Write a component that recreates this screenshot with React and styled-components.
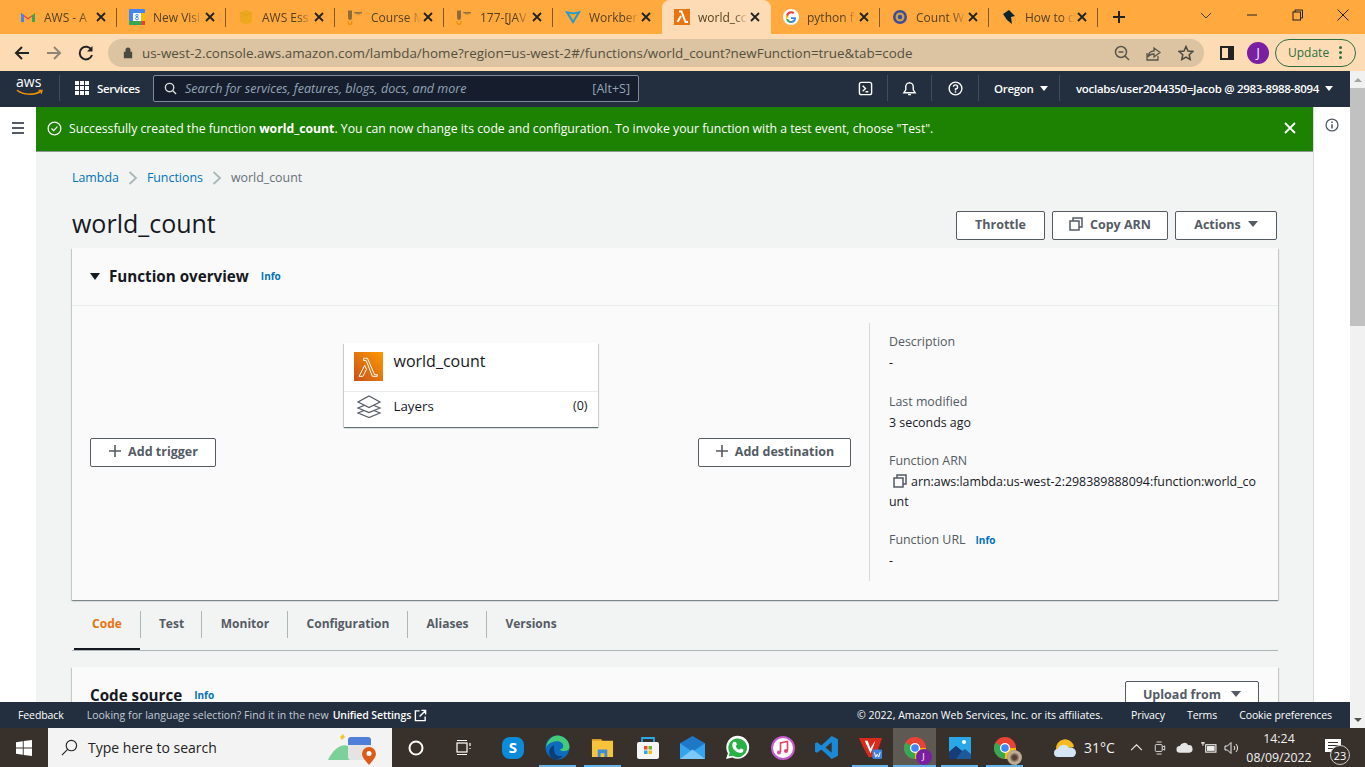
import React from 'react'
import styled, { createGlobalStyle } from 'styled-components'

const Global = createGlobalStyle`
  html, body { margin: 0; padding: 0; overflow: hidden; }
  * { box-sizing: border-box; }
  body { font-family: "Open Sans", "Liberation Sans", sans-serif; }
`

const Screen = styled.div`
  width: 1365px;
  height: 767px;
  display: flex;
  flex-direction: column;
  overflow: hidden;
  background: #fff;
`

/* browser chrome */
const TabStrip = styled.div`
  height: 34px;
  background: #ffa93f;
  display: flex;
  padding-left: 8px;
  flex: none;
`
const Tab = styled.div`
  width: 109px;
  height: 34px;
  padding-left: 12px;
  display: flex;
  align-items: center;
  position: relative;
  font-size: 12px;
  color: #54401f;
  background: ${p => (p.$active ? '#fddcb5' : 'transparent')};
  border-radius: ${p => (p.$active ? '8px 8px 0 0' : '0')};
  &::after {
    content: '';
    display: ${p => (p.$sep ? 'block' : 'none')};
    position: absolute;
    right: 0;
    top: 8px;
    height: 19px;
    width: 1px;
    background: #7a5a2a;
  }
`
const TabIcon = styled.span`
  width: 16px;
  height: 16px;
  flex: none;
  margin-right: 8px;
  display: flex;
`
const TabTitle = styled.span`
  width: 50px;
  flex: none;
  white-space: nowrap;
  -webkit-mask-image: linear-gradient(to right, #000 72%, transparent 100%);
  mask-image: linear-gradient(to right, #000 72%, transparent 100%);
`
const TabClose = styled.svg`
  width: 10px;
  height: 10px;
  margin-left: 2px;
  flex: none;
`
const NewTab = styled.svg`
  width: 14px;
  height: 14px;
  margin: 10px 0 0 14px;
`
const WindowButtons = styled.div`
  margin-left: auto;
  display: flex;
  height: 34px;
`
const WindowBtn = styled.div`
  width: ${p => p.$w || 46}px;
  height: 30px;
  display: flex;
  align-items: center;
  justify-content: center;
`
const Toolbar = styled.div`
  height: 37px;
  background: #fddcb5;
  display: flex;
  align-items: center;
  padding-left: 13px;
  flex: none;
`
const NavIcon = styled.svg`
  width: 18px;
  height: 18px;
  margin-right: 14px;
  flex: none;
`
const SidePanelIcon = styled(NavIcon)`
  margin: 0 0 0 14px;
`
const UrlPill = styled.div`
  width: 1096px;
  height: 28px;
  margin-left: -1px;
  border-radius: 14px;
  background: #dcc3a1;
  display: flex;
  align-items: center;
  padding: 0 10px 0 15px;
  font-size: 13.4px;
  color: #54503f;
`
const UrlText = styled.span`
  margin-left: 9px;
  flex: 1;
  white-space: nowrap;
`
const UrlAction = styled.svg`
  width: 16px;
  height: 16px;
  margin-left: 16px;
  flex: none;
`
const Avatar = styled.div`
  width: ${p => p.$size || 22}px;
  height: ${p => p.$size || 22}px;
  margin-left: ${p => p.$ml || 0}px;
  border-radius: 50%;
  background: #7b1fa2;
  color: #fff;
  font-size: ${p => (p.$size ? 9 : 12)}px;
  display: flex;
  align-items: center;
  justify-content: center;
  flex: none;
`
const UpdateBtn = styled.div`
  width: 81px;
  height: 28px;
  margin-left: 6px;
  border: 1px solid #2c6e3f;
  border-radius: 14px;
  background: #fddcb5;
  color: #2c6e3f;
  font-size: 12px;
  display: flex;
  align-items: center;
  padding-left: 12px;
  gap: 10px;
`
const Dots = styled.span`
  display: flex;
  flex-direction: column;
  gap: 2px;
  & > i { width: 3px; height: 3px; border-radius: 50%; background: #2c6e3f; display: block; }
`

/* page with its scrollbar */
const PageRow = styled.div`
  flex: 1;
  min-height: 0;
  display: flex;
`
const PageCol = styled.div`
  flex: 1;
  min-width: 0;
  display: flex;
  flex-direction: column;
`
const Scrollbar = styled.div`
  width: 15px;
  background: #f1f1f1;
  display: flex;
  flex-direction: column;
  align-items: center;
`
const ScrollUp = styled.div`
  height: 17px;
  width: 100%;
  display: flex;
  align-items: center;
  justify-content: center;
  &::before {
    content: '';
    border-left: 4px solid transparent;
    border-right: 4px solid transparent;
    border-bottom: 4px solid #a3a3a3;
  }
`
const ScrollThumb = styled.div`
  height: 238px;
  width: 100%;
  background: #c1c1c1;
`
const ScrollDown = styled.div`
  margin-top: auto;
  height: 17px;
  width: 100%;
  display: flex;
  align-items: center;
  justify-content: center;
  &::before {
    content: '';
    border-left: 4px solid transparent;
    border-right: 4px solid transparent;
    border-top: 4px solid #505050;
  }
`

/* aws top nav */
const AwsNav = styled.div`
  height: 36px;
  flex: none;
  background: #232f3e;
  color: #fff;
  display: flex;
  align-items: center;
  font-size: 11.5px;
  font-weight: 600;
  padding-bottom: 2px;
  letter-spacing: -0.3px;
`
const AwsLogo = styled.div`
  width: 60px;
  height: 26px;
  padding-left: 16px;
  border-right: 1px solid #414d5c;
  flex: none;
  display: flex;
  flex-direction: column;
  & > span { font-size: 14px; font-weight: 400; line-height: 14px; letter-spacing: 0; }
`
const ServicesBtn = styled.div`
  display: flex;
  align-items: center;
  gap: 8px;
  width: 93px;
  padding-left: 15px;
  flex: none;
`
const GridDots = styled.div`
  display: grid;
  grid-template-columns: repeat(3, 4px);
  grid-auto-rows: 4px;
  gap: 1px;
  & > i { background: #fff; display: block; }
`
const SearchBox = styled.div`
  width: 486px;
  height: 27px;
  background: #161e2d;
  border: 1px solid #7d8998;
  border-radius: 2px;
  display: flex;
  align-items: center;
  padding: 0 8px 0 10px;
  color: #95a5b8;
  font-weight: 400;
  font-size: 12.5px;
  letter-spacing: 0;
`
const SearchText = styled.span`
  margin-left: 8px;
  flex: 1;
  font-style: italic;
`
const NavRight = styled.div`
  margin-left: auto;
  display: flex;
  align-items: center;
  height: 100%;
`
const NavCell = styled.div`
  height: 26px;
  display: flex;
  align-items: center;
  justify-content: ${p => (p.$pad ? 'flex-start' : 'center')};
  width: ${p => p.$w}px;
  padding-left: ${p => p.$pad || 0}px;
  border-right: ${p => (p.$last ? 'none' : '1px solid #414d5c')};
  gap: 6px;
  white-space: nowrap;
`
const Caret = styled.span`
  border-left: ${p => p.$s || 4}px solid transparent;
  border-right: ${p => p.$s || 4}px solid transparent;
  border-top: ${p => (p.$s ? p.$s + 1 : 5)}px solid ${p => p.$c || '#fff'};
  display: inline-block;
  flex: none;
`

/* console body */
const Body = styled.div`
  flex: 1;
  min-height: 0;
  display: flex;
  overflow: hidden;
`
const SideRail = styled.div`
  width: 36px;
  flex: none;
  background: #fff;
  padding: 15px 0 0 12px;
  display: flex;
  flex-direction: column;
  gap: 3px;
  & > i { display: block; width: 12px; height: 2px; background: #545b64; }
`
const Main = styled.div`
  width: 1278px;
  flex: none;
  background: #f2f3f3;
  border-right: 1px solid #d5dbdb;
  overflow: hidden;
`
const InfoRail = styled.div`
  flex: 1;
  background: #fff;
  display: flex;
  justify-content: center;
  padding-top: 11px;
`
const Banner = styled.div`
  height: 45px;
  background: #1d8102;
  border-bottom: 1px solid #8f9a94;
  color: #fff;
  font-size: 12.23px;
  font-weight: 500;
  display: flex;
  align-items: center;
  padding: 0 17px 2px 11px;
  & > svg:first-child { margin-right: 7px; }
  & b { font-weight: 700; }
`
const BannerText = styled.div`
  flex: 1;
  white-space: nowrap;
`
const Content = styled.div`
  padding: 0 35px 0 36px;
`
const Crumbs = styled.div`
  display: flex;
  align-items: center;
  height: 50px;
  padding-top: 1px;
  font-size: 12.4px;
  color: #687078;
  gap: 9px;
`
const CrumbLink = styled.span`
  color: #0073bb;
`
const TitleRow = styled.div`
  display: flex;
  align-items: center;
  height: 42px;
  gap: 7px;
  padding-right: 1px;
`
const Title = styled.h1`
  margin: 0 auto 0 0;
  font-size: 25px;
  font-weight: 400;
  color: #16191f;
`
const Btn = styled.div`
  width: ${p => p.$w}px;
  height: 29px;
  border: 1px solid #545b64;
  border-radius: 2px;
  background: #fff;
  color: #545b64;
  font-size: 12.5px;
  font-weight: 700;
  display: flex;
  align-items: center;
  justify-content: center;
  gap: 7px;
  flex: none;
  padding-bottom: 3px;
`
const ActionBtn = styled(Btn)`
  margin-top: 5px;
`
const Panel = styled.section`
  background: #fafafa;
  box-shadow: 0 1px 1px 0 rgba(0, 28, 36, 0.3), 1px 1px 1px 0 rgba(0, 28, 36, 0.15), -1px 1px 1px 0 rgba(0, 28, 36, 0.15);
  margin-top: 4px;
`
const PanelHeader = styled.div`
  height: 58px;
  border-bottom: 1px solid #eaeded;
  display: flex;
  align-items: center;
  padding: 0 0 2px 18px;
`
const DiscloseCaret = styled.span`
  border-left: 5.5px solid transparent;
  border-right: 5.5px solid transparent;
  border-top: 7px solid #16191f;
  margin-right: 9px;
  margin-top: 1px;
`
const PanelTitle = styled.h2`
  margin: 0;
  font-size: 15.2px;
  font-weight: 700;
  color: #16191f;
`
const InfoLink = styled.span`
  color: #0073bb;
  font-size: 10px;
  font-weight: 700;
  margin-left: ${p => p.$ml || 12}px;
`
const Overview = styled.div`
  height: 294px;
  display: flex;
`
const Diagram = styled.div`
  width: 797px;
  flex: none;
  padding: 37px 18px 0;
  display: grid;
  grid-template-columns: 1fr auto 1fr;
  align-items: start;
`
const OutlineBtn = styled(Btn)`
  margin-top: 95px;
  justify-self: ${p => (p.$end ? 'end' : 'start')};
  gap: 6px;
`
const FnCard = styled.div`
  width: 254px;
  height: 84px;
  background: #fff;
  box-shadow: 0 1px 1px 0 rgba(0, 28, 36, 0.5), 1px 1px 1px 0 rgba(0, 28, 36, 0.12), -1px 1px 1px 0 rgba(0, 28, 36, 0.12);
`
const FnTop = styled.div`
  height: 49px;
  border-bottom: 1px solid #eaeded;
  padding: 9px 0 0 10px;
  display: flex;
  gap: 11px;
  font-size: 16px;
  color: #16191f;
`
const LambdaBox = styled.div`
  width: 29px;
  height: 29px;
  background: linear-gradient(to top right, #c8511b, #ff9900);
  display: flex;
  align-items: center;
  justify-content: center;
  flex: none;
`
const FnName = styled.span`
  line-height: 19px;
`
const FnBottom = styled.div`
  height: 35px;
  display: flex;
  align-items: center;
  padding: 0 10px 8px 12px;
  font-size: 13.3px;
  color: #16191f;
  gap: 12px;
  & > span:last-child { margin-left: auto; font-size: 12.5px; }
`
const Details = styled.div`
  margin-top: 17px;
  height: 258px;
  border-left: 1px solid #d5dbdb;
  padding-left: 19px;
  flex: 1;
  font-size: 12.4px;
  line-height: 20px;
  color: #16191f;
`
const DetailLabel = styled.div`
  color: #545b64;
  margin-top: ${p => p.$mt || 0}px;
`
const DetailValue = styled.div`
  margin-top: 1px;
  word-break: break-all;
  width: 372px;
  & > svg { margin: 0 4px -2px 4px; }
`
const TabsBar = styled.div`
  margin-top: 11px;
  height: 40px;
  border-bottom: 1px solid #aab7b8;
  display: flex;
  padding-left: 2px;
`
const PageTab = styled.div`
  height: 39px;
  position: relative;
  display: flex;
  align-items: center;
  justify-content: center;
  width: ${p => p.$w}px;
  font-size: 12px;
  font-weight: 700;
  color: ${p => (p.$active ? '#ec7211' : '#545b64')};
  padding-bottom: ${p => (p.$active ? 12 : 14)}px;
  padding-left: ${p => (p.$active ? 0 : 2)}px;
  border-bottom: ${p => (p.$active ? '2px solid #16191f' : 'none')};
  &::after {
    content: '';
    display: ${p => (p.$last ? 'none' : 'block')};
    position: absolute;
    right: -1px;
    top: 0;
    height: 27px;
    width: 1px;
    background: #aab7b8;
  }
`
const CodePanel = styled(Panel)`
  margin-top: 16px;
  height: 60px;
  display: flex;
  padding: 14px 19px 0 18px;
  justify-content: space-between;
`
const CodeTitle = styled.div`
  display: flex;
  align-items: center;
  height: 26px;
  margin-top: 1px;
`
const UploadBtn = styled(Btn)`
  gap: 10px;
`

/* footer */
const Footer = styled.div`
  height: 26px;
  flex: none;
  background: #232f3e;
  color: #fff;
  font-size: 10.5px;
  font-weight: 500;
  display: flex;
  align-items: center;
  padding-left: 18px;
  letter-spacing: -0.1px;
`
const FooterMuted = styled.span`
  color: #c4ccd6;
  margin-left: 23px;
  letter-spacing: 0.04px;
`
const FooterStrong = styled.span`
  font-weight: 600;
  margin-left: 4px;
`
const FooterIcon = styled.svg`
  margin-left: 3px;
`
const FooterRight = styled.div`
  margin-left: auto;
  display: flex;
  gap: 22px;
  padding-right: 18px;
`
const Copyright = styled.span`
  letter-spacing: 0.02px;
  margin-right: 6px;
`

/* windows taskbar */
const Taskbar = styled.div`
  height: 39px;
  flex: none;
  background: #38312b;
  display: flex;
  align-items: center;
  color: #fff;
`
const StartBtn = styled.div`
  width: 48px;
  display: flex;
  justify-content: center;
`
const WinSearch = styled.div`
  width: 344px;
  height: 39px;
  background: #f3f3f3;
  color: #222;
  display: flex;
  align-items: center;
  padding: 0 16px 0 13px;
  font-size: 14px;
  gap: 10px;
  flex: none;
`
const WinSearchText = styled.span`
  flex: 1;
`
const TaskIcon = styled.div`
  width: ${p => p.$w || 45}px;
  height: 39px;
  display: flex;
  align-items: center;
  justify-content: center;
  position: relative;
  flex: none;
  background: ${p => (p.$active ? '#5e5952' : 'transparent')};
  background-clip: content-box;
  padding: ${p => (p.$active ? '0 1px' : '0')};
  &::after {
    content: '';
    display: ${p => (p.$open ? 'block' : 'none')};
    position: absolute;
    left: ${p => (p.$active ? 1 : 4)}px;
    right: ${p => (p.$active ? 1 : 4)}px;
    bottom: 0;
    height: 2px;
    background: #63b5ee;
  }
`
const AppIcons = styled.div`
  display: flex;
  margin-left: 3px;
`
const Tray = styled.div`
  margin-left: auto;
  display: flex;
  align-items: center;
  height: 100%;
`
const Weather = styled.div`
  display: flex;
  align-items: center;
  font-size: 14px;
  gap: 7px;
  width: 71px;
  color: #f0f0f0;
`
const TrayIcon = styled.div`
  width: 24px;
  display: flex;
  justify-content: center;
  align-items: center;
`
const Clock = styled.div`
  width: 70px;
  text-align: center;
  font-size: 12.3px;
  line-height: 19px;
  color: #f0f0f0;
`
const Notify = styled.div`
  width: 51px;
  height: 39px;
  position: relative;
  padding: 10px 0 0 11px;
`
const NotifyBadge = styled.div`
  position: absolute;
  left: 16px;
  top: 17px;
  width: 20px;
  height: 20px;
  border-radius: 50%;
  border: 1px solid #ccc;
  background: #38312b;
  font-size: 11px;
  display: flex;
  align-items: center;
  justify-content: center;
`

const X = ({ c = '#222', w = 1.8 }) => (
  <TabClose viewBox="0 0 10 10"><path d="M1 1l8 8M9 1l-8 8" stroke={c} strokeWidth={w} /></TabClose>
)
const Gmail = () => (
  <svg viewBox="0 0 16 16" width="16" height="16">
    <path d="M1 13V4l7 5 7-5v9h-3V7.500L8 10.500 4 7.500V13z" fill="#ea4335" />
    <path d="M1 4v9h3V6z" fill="#4285f4" /><path d="M15 4v9h-3V6z" fill="#34a853" />
    <path d="M12 6l3-2v0l-1-1-2 1.500z" fill="#fbbc04" />
  </svg>
)
const Calendar = () => (
  <svg viewBox="0 0 16 16" width="16" height="16">
    <rect x="0" y="0" width="16" height="16" rx="1" fill="#4285f4" />
    <rect x="12" y="4" width="4" height="8" fill="#fbbc04" /><rect x="0" y="12" width="12" height="4" fill="#34a853" />
    <rect x="12" y="12" width="4" height="4" fill="#ea4335" /><rect x="4" y="4" width="8" height="8" fill="#fff" />
    <circle cx="8" cy="6.500" r="1.200" fill="none" stroke="#4285f4" /><circle cx="8" cy="9.500" r="1.400" fill="none" stroke="#4285f4" />
  </svg>
)
const Cube = () => (
  <svg viewBox="0 0 16 16" width="16" height="16">
    <path d="M8 1l6 2.500V13l-6 2.500L2 13V3.500z" fill="#eda81f" /><path d="M2 3.500L8 6l6-2.500" fill="none" stroke="#e2a01d" />
  </svg>
)
const Owl = () => (
  <svg viewBox="0 0 16 16" width="16" height="16">
    <path d="M1 1l1 1 1-1 1 1 1-1v7a2 3 0 0 1-4 0z" fill="#8b6b3a" />
    <path d="M7 3h8v1l-1 1-1-1-1 2-1-2-1 2-1-2-1 1z" fill="#8f7140" />
    <path d="M1 12a2 3.500 0 0 0 4 0" fill="none" stroke="#f29111" strokeWidth="1.400" />
  </svg>
)
const Vite = () => (
  <svg viewBox="0 0 16 16" width="16" height="16">
    <path d="M0 2l8 1.500L16 2 8 15z" fill="#1f9cd8" /><path d="M4 4.500l4 .8 4-.8-4 7z" fill="#f7a21b" />
    <path d="M6 6l2 .3 2-.3-2 3.600z" fill="#ffa93f" />
  </svg>
)
const LambdaGlyph = ({ s = 24, sw = 0.9 }) => (
  <svg viewBox="0 0 22 22" width={s} height={s}>
    <path d="M7 3h3.500l6.500 15h2.500v1.500h-4.500L9.300 5H7zM8 9.500l1.600 3.600-3.200 6.400H2.800z" fill="none" stroke="#fff" strokeWidth={sw} />
  </svg>
)
const Google = () => (
  <svg viewBox="0 0 16 16" width="16" height="16">
    <circle cx="8" cy="8" r="8" fill="#fff" />
    <path d="M13 8.200H8v1.700h3c-.4 1.300-1.500 2-3 2V14c2.800 0 5-2 5-5z" fill="#4285f4" />
    <path d="M3.200 10a5.200 5.200 0 0 0 4.800 4v-2c-1.200 0-2.300-.8-2.800-2z" fill="#34a853" />
    <path d="M3.200 6a5.300 5.300 0 0 0 0 4l2-1.200a3 3 0 0 1 0-1.600z" fill="#fbbc04" />
    <path d="M3.200 6l2 1.200C5.700 5 6.800 4.300 8 4.300c.8 0 1.500.3 2 .8l1.500-1.500A5 5 0 0 0 8 2.200 5.200 5.200 0 0 0 3.200 6z" fill="#ea4335" />
  </svg>
)
const Seal = () => (
  <svg viewBox="0 0 16 16" width="16" height="16">
    <circle cx="8" cy="8" r="7" fill="#3f4a9b" /><circle cx="8" cy="8" r="4.500" fill="#c9a24a" /><circle cx="8" cy="8" r="2.200" fill="#3f4a9b" />
  </svg>
)
const Quill = () => (
  <svg viewBox="0 0 16 16" width="16" height="16">
    <path d="M2 5l6-4 6 6-4 1 1 7-5-4z" fill="#10222e" />
  </svg>
)
const TabLambda = () => (
  <svg viewBox="0 0 16 16" width="16" height="16">
    <rect width="16" height="16" fill="#e8730f" />
    <path d="M5 2.500h2.500l4 10.500H14M7 7l-3.500 6" fill="none" stroke="#fff" strokeWidth="2" />
  </svg>
)

// only the part of each title that shows before chrome fades it out
const tabs = [
  { title: 'AWS - A', Icon: Gmail, sep: true },
  { title: 'New Visi', Icon: Calendar, sep: true },
  { title: 'AWS Ess', Icon: Cube, sep: true },
  { title: 'Course M', Icon: Owl, sep: true },
  { title: '177-[JAV', Icon: Owl, sep: true },
  { title: 'Workber', Icon: Vite, sep: false },
  { title: 'world_cc', Icon: TabLambda, active: true, sep: false },
  { title: 'python f', Icon: Google, sep: true },
  { title: 'Count W', Icon: Seal, sep: true },
  { title: 'How to c', Icon: Quill, sep: true },
]

const pageTabs = [
  { label: 'Code', w: 66, active: true },
  { label: 'Test', w: 61 },
  { label: 'Monitor', w: 86 },
  { label: 'Configuration', w: 120 },
  { label: 'Aliases', w: 79 },
  { label: 'Versions', w: 88, last: true },
]

const CopyIcon = ({ c = '#545b64' }) => (
  <svg viewBox="0 0 14 14" width="14" height="14" fill="none" stroke={c} strokeWidth="1.500">
    <rect x="1" y="4" width="9" height="9" /><path d="M4 4V1h9v9h-3" />
  </svg>
)
const Plus = () => (
  <svg viewBox="0 0 14 14" width="14" height="14"><path d="M7 1v12M1 7h12" stroke="#545b64" strokeWidth="1.600" /></svg>
)
const CrumbChevron = () => (
  <svg viewBox="0 0 10 14" width="10" height="14"><path d="M1.500 1l6.500 6-6.500 6" fill="none" stroke="#aab7b8" strokeWidth="1.800" /></svg>
)
const Windows = () => (
  <svg viewBox="0 0 16 16" width="16" height="16">
    <path d="M0 2.200l6.800-1v6.300H0zM7.700 1l8.300-1v7.500H7.700zM0 8.500h6.800v6.300l-6.800-1zM7.700 8.500H16V16l-8.300-1.100z" fill="#fff" />
  </svg>
)
const Chrome = () => (
  <svg viewBox="0 0 24 24" width="24" height="24">
    <circle cx="12" cy="12" r="11" fill="#ea4335" />
    <path d="M12 12L2.500 6.500A11 11 0 0 0 12 23z" fill="#34a853" />
    <path d="M12 12h11a11 11 0 0 1-11 11z" fill="#fbbc04" />
    <circle cx="12" cy="12" r="5" fill="#fff" /><circle cx="12" cy="12" r="3.800" fill="#4285f4" />
  </svg>
)
const ChromeWrap = styled.div`
  position: relative;
  width: 24px;
  height: 24px;
`
const ChromeBadge = styled.div`
  position: absolute;
  right: -5px;
  bottom: -5px;
`
const Thumb = styled.div`
  width: 15px;
  height: 15px;
  border-radius: 50%;
  background: radial-gradient(circle, #574236 20%, #c4b49d 50%, #8b7a66 100%);
`

export default function App() {
  return (
    <Screen>
      <Global />
      <TabStrip>
        {tabs.map(t => (
          <Tab key={t.title} $active={t.active} $sep={t.sep}>
            <TabIcon><t.Icon /></TabIcon>
            <TabTitle>{t.title}</TabTitle>
            <X />
          </Tab>
        ))}
        <NewTab viewBox="0 0 14 14"><path d="M7 1v12M1 7h12" stroke="#222" strokeWidth="2" /></NewTab>
        <WindowButtons>
          <WindowBtn>
            <svg viewBox="0 0 12 12" width="12" height="12"><path d="M1 4l5 5 5-5" fill="none" stroke="#3a3a3a" /></svg>
          </WindowBtn>
          <WindowBtn>
            <svg viewBox="0 0 12 12" width="12" height="12"><path d="M1 6h10" stroke="#222" /></svg>
          </WindowBtn>
          <WindowBtn>
            <svg viewBox="0 0 12 12" width="12" height="12" fill="none" stroke="#222"><rect x="1" y="3" width="7.500" height="8" /><path d="M3 3V1h7.500v8H8.500" /></svg>
          </WindowBtn>
          <WindowBtn $w={44}>
            <svg viewBox="0 0 12 12" width="12" height="12"><path d="M.5.5l11 11M11.500.5l-11 11" stroke="#222" /></svg>
          </WindowBtn>
        </WindowButtons>
      </TabStrip>

      <Toolbar>
        <NavIcon viewBox="0 0 18 18"><path d="M16 9H3M9 3L3 9l6 6" fill="none" stroke="#222" strokeWidth="2" /></NavIcon>
        <NavIcon viewBox="0 0 18 18"><path d="M2 9h13M9 3l6 6-6 6" fill="none" stroke="#8f8576" strokeWidth="2" /></NavIcon>
        <NavIcon viewBox="0 0 18 18"><path d="M14.500 6A6.300 6.300 0 1 0 15 11" fill="none" stroke="#222" strokeWidth="2" /><path d="M15.500 2v5.500H10z" fill="#222" /></NavIcon>
        <UrlPill>
          <svg viewBox="0 0 12 14" width="10" height="13"><path d="M3 6V4a3 3 0 0 1 6 0v2h2v8H1V6z" fill="#4d4a40" /></svg>
          <UrlText>us-west-2.console.aws.amazon.com/lambda/home?region=us-west-2#/functions/world_count?newFunction=true&amp;tab=code</UrlText>
          <UrlAction viewBox="0 0 16 16" fill="none" stroke="#5a564a" strokeWidth="1.500"><circle cx="7" cy="7" r="5.500" /><path d="M11 11l4 4M4.500 7h5" /></UrlAction>
          <UrlAction viewBox="0 0 16 16" fill="none" stroke="#5a564a" strokeWidth="1.300"><path d="M1 8v7h11v-4M8 3v3C4 6 2.500 8.500 2 12c1.500-2.500 3-3 6-3v3l6-4.500z" /></UrlAction>
          <UrlAction viewBox="0 0 16 16" fill="none" stroke="#4d4a40" strokeWidth="1.500"><path d="M8 1.500l2 4.500 4.800.5-3.600 3.200 1 4.800L8 12l-4.200 2.500 1-4.800L1.200 6.500 6 6z" /></UrlAction>
        </UrlPill>
        <SidePanelIcon viewBox="0 0 18 18"><rect x="2" y="2" width="14" height="14" fill="#222" /><rect x="4" y="4" width="6" height="10" fill="#fddcb5" /></SidePanelIcon>
        <Avatar $ml={11}>J</Avatar>
        <UpdateBtn>
          Update
          <Dots><i /><i /><i /></Dots>
        </UpdateBtn>
      </Toolbar>

      <PageRow>
        <PageCol>
          <AwsNav>
            <AwsLogo>
              <span>aws</span>
              <svg viewBox="0 0 30 8" width="28" height="8"><path d="M1 1c7 5 18 6 26 1" fill="none" stroke="#ff9900" strokeWidth="1.500" /><path d="M24 1l4 0-1 4" fill="none" stroke="#ff9900" strokeWidth="1.200" /></svg>
            </AwsLogo>
            <ServicesBtn>
              <GridDots>{Array.from({ length: 9 }, (_, i) => <i key={i} />)}</GridDots>
              Services
            </ServicesBtn>
            <SearchBox>
              <svg viewBox="0 0 14 14" width="13" height="13" fill="none" stroke="#d5dbdb" strokeWidth="1.500"><circle cx="6" cy="6" r="4.500" /><path d="M9.500 9.500L13 13" /></svg>
              <SearchText>Search for services, features, blogs, docs, and more</SearchText>
              <span>[Alt+S]</span>
            </SearchBox>
            <NavRight>
              <NavCell $w={44}>
                <svg viewBox="0 0 16 16" width="15" height="15" fill="none" stroke="#fff" strokeWidth="1.500"><rect x="1.500" y="1.500" width="13" height="13" rx="2" /><path d="M5 5l3 3-3 3M8 11.500h3" /></svg>
              </NavCell>
              <NavCell $w={44}>
                <svg viewBox="0 0 16 16" width="15" height="15" fill="none" stroke="#fff" strokeWidth="1.500"><path d="M2 12.500h12l-2-3V6a4 4 0 0 0-8 0v3.500zM8 1v1M6.500 14.500h3" /></svg>
              </NavCell>
              <NavCell $w={47}>
                <svg viewBox="0 0 16 16" width="15" height="15" fill="none" stroke="#fff" strokeWidth="1.500"><circle cx="8" cy="8" r="6.800" /><path d="M5.800 6.200A2.200 2.200 0 1 1 8 8.500V10M8 11v1.500" /></svg>
              </NavCell>
              <NavCell $w={81} $pad={15}>Oregon <Caret /></NavCell>
              <NavCell $last $w={290} $pad={16}>voclabs/user2044350=Jacob @ 2983-8988-8094 <Caret /></NavCell>
            </NavRight>
          </AwsNav>

          <Body>
            <SideRail><i /><i /><i /></SideRail>
            <Main>
              <Banner>
                <svg viewBox="0 0 16 16" width="15" height="15" fill="none" stroke="#fff" strokeWidth="1.300"><circle cx="8" cy="8" r="6.800" /><path d="M4.800 8l2.300 2.300 4-4.300" /></svg>
                <BannerText>Successfully created the function <b>world_count</b>. You can now change its code and configuration. To invoke your function with a test event, choose "Test".</BannerText>
                <svg viewBox="0 0 12 12" width="12" height="12"><path d="M1 1l10 10M11 1L1 11" stroke="#fff" strokeWidth="1.800" /></svg>
              </Banner>
              <Content>
                <Crumbs>
                  <CrumbLink>Lambda</CrumbLink>
                  <CrumbChevron />
                  <CrumbLink>Functions</CrumbLink>
                  <CrumbChevron />
                  <span>world_count</span>
                </Crumbs>
                <TitleRow>
                  <Title>world_count</Title>
                  <ActionBtn $w={89}>Throttle</ActionBtn>
                  <ActionBtn $w={116}><CopyIcon /> Copy ARN</ActionBtn>
                  <ActionBtn $w={102}>Actions <Caret $s={5} $c="#545b64" /></ActionBtn>
                </TitleRow>
                <Panel>
                  <PanelHeader>
                    <DiscloseCaret />
                    <PanelTitle>Function overview</PanelTitle>
                    <InfoLink>Info</InfoLink>
                  </PanelHeader>
                  <Overview>
                    <Diagram>
                      <OutlineBtn $w={126}><Plus /> Add trigger</OutlineBtn>
                      <FnCard>
                        <FnTop>
                          <LambdaBox><LambdaGlyph /></LambdaBox>
                          <FnName>world_count</FnName>
                        </FnTop>
                        <FnBottom>
                          <svg viewBox="0 0 26 24" width="26" height="24" fill="#fff" stroke="#545b64" strokeWidth="1.200">
                            <path d="M13 14.500l11 4.500-11 4.500L2 19z" /><path d="M13 9.500L24 14l-11 4.500L2 14z" /><path d="M13 2L24 8l-11 5.500L2 8z" />
                          </svg>
                          <span>Layers</span>
                          <span>(0)</span>
                        </FnBottom>
                      </FnCard>
                      <OutlineBtn $end $w={153}><Plus /> Add destination</OutlineBtn>
                    </Diagram>
                    <Details>
                      <DetailLabel $mt={9}>Description</DetailLabel>
                      <DetailValue>-</DetailValue>
                      <DetailLabel $mt={19}>Last modified</DetailLabel>
                      <DetailValue>3 seconds ago</DetailValue>
                      <DetailLabel $mt={18}>Function ARN</DetailLabel>
                      <DetailValue><CopyIcon />arn:aws:lambda:us-west-2:298389888094:function:world_count</DetailValue>
                      <DetailLabel $mt={18}>Function URL<InfoLink $ml={10}>Info</InfoLink></DetailLabel>
                      <DetailValue>-</DetailValue>
                    </Details>
                  </Overview>
                </Panel>
                <TabsBar>
                  {pageTabs.map(t => (
                    <PageTab key={t.label} $w={t.w} $active={t.active} $last={t.last}>{t.label}</PageTab>
                  ))}
                </TabsBar>
                <CodePanel>
                  <CodeTitle>
                    <PanelTitle>Code source</PanelTitle>
                    <InfoLink>Info</InfoLink>
                  </CodeTitle>
                  <UploadBtn $w={134}>Upload from <Caret $s={5} $c="#545b64" /></UploadBtn>
                </CodePanel>
              </Content>
            </Main>
            <InfoRail>
              <svg viewBox="0 0 16 16" width="14" height="14" fill="none" stroke="#545b64" strokeWidth="1.500"><circle cx="8" cy="8" r="6.800" /><path d="M8 7v5M8 4v1.800" strokeWidth="1.800" /></svg>
            </InfoRail>
          </Body>

          <Footer>
            <span>Feedback</span>
            <FooterMuted>Looking for language selection? Find it in the new</FooterMuted>
            <FooterStrong>Unified Settings</FooterStrong>
            <FooterIcon viewBox="0 0 14 14" width="13" height="13" fill="none" stroke="#fff" strokeWidth="1.500"><path d="M6 2H1.500v10.500H12V8M8 1.500h4.500V6M12.500 1.500L6 8" /></FooterIcon>
            <FooterRight>
              <Copyright>© 2022, Amazon Web Services, Inc. or its affiliates.</Copyright>
              <span>Privacy</span>
              <span>Terms</span>
              <span>Cookie preferences</span>
            </FooterRight>
          </Footer>
        </PageCol>
        <Scrollbar>
          <ScrollUp />
          <ScrollThumb />
          <ScrollDown />
        </Scrollbar>
      </PageRow>

      <Taskbar>
        <StartBtn><Windows /></StartBtn>
        <WinSearch>
          <svg viewBox="0 0 18 18" width="17" height="17" fill="none" stroke="#222" strokeWidth="1.200"><circle cx="11" cy="7" r="5.500" /><path d="M7 11l-6 6" /></svg>
          <WinSearchText>Type here to search</WinSearchText>
          <svg viewBox="0 0 48 34" width="48" height="34">
            <path d="M12 6l3-3 2 3-3 3z" fill="#f8c52c" />
            <path d="M0 29c5-11 14-17 20-14 4 2 4 8 5 14z" fill="#7ed09a" />
            <rect x="20" y="6" width="23" height="23" rx="3" fill="#e4e4e4" /><path d="M20 14V9a3 3 0 0 1 3-3h17a3 3 0 0 1 3 3v5z" fill="#4f7fd8" />
            <path d="M41 34c-4-5-7-8-7-11a7 7 0 0 1 14 0c0 3-3 6-7 11z" fill="#dd5b18" /><circle cx="41" cy="22.500" r="2.500" fill="#fff" />
          </svg>
        </WinSearch>
        <TaskIcon $w={48}>
          <svg viewBox="0 0 16 16" width="16" height="16" fill="none" stroke="#fff" strokeWidth="2"><circle cx="8" cy="8" r="6.500" /></svg>
        </TaskIcon>
        <TaskIcon $w={47}>
          <svg viewBox="0 0 18 18" width="18" height="18" fill="none" stroke="#fff" strokeWidth="1.200"><rect x="2" y="4" width="10" height="9" /><path d="M2 1.500h10M2 15.500h10M15 4v3M15 9v1" /></svg>
        </TaskIcon>
        <AppIcons>
          <TaskIcon>
            <svg viewBox="0 0 24 24" width="24" height="24"><rect x="1" y="1" width="22" height="22" rx="8" fill="#0c8cd8" /><text x="12" y="17" textAnchor="middle" fontSize="15" fontWeight="700" fill="#fff" fontFamily="Open Sans">S</text></svg>
          </TaskIcon>
          <TaskIcon $open>
            <svg viewBox="0 0 24 24" width="25" height="25"><circle cx="12" cy="12" r="11.500" fill="#0f6cbd" /><path d="M1 12C2 5 7 .5 12 .5c6 0 11.500 5 11.500 11 0 3-3 4-6 4-2 0-3-1-3-2 2 0 3-1 3-3 0-3-3-4.500-6-4.500C7 6 3 8 1 12z" fill="#45c97a" /><path d="M9 15c0 4 4 6 8 5-1 2-4 3.500-6 3.500-5 0-7-4-7-7s2-6 5-7c-1 1.500 0 5.500 0 5.500z" fill="#0a3f7a" /></svg>
          </TaskIcon>
          <TaskIcon $open>
            <svg viewBox="0 0 24 24" width="23" height="23"><path d="M1 3h9l2 2h11v17H1z" fill="#f8c23d" /><path d="M1 3h9l2 2H1z" fill="#d99a20" /><path d="M7 22v-8h10v8h-3v-4h-4v4z" fill="#3b8ed8" /></svg>
          </TaskIcon>
          <TaskIcon>
            <svg viewBox="0 0 24 24" width="24" height="24"><rect x="1" y="6" width="22" height="17" rx="2" fill="#f5f5f5" /><path d="M6 6V2h12v4" fill="none" stroke="#2aa8e8" strokeWidth="1.800" /><rect x="8" y="10" width="3.500" height="3.500" fill="#e74c2c" /><rect x="12.500" y="10" width="3.500" height="3.500" fill="#6fb52c" /><rect x="8" y="14.500" width="3.500" height="3.500" fill="#2aa8e8" /><rect x="12.500" y="14.500" width="3.500" height="3.500" fill="#f8b91c" /></svg>
          </TaskIcon>
          <TaskIcon>
            <svg viewBox="0 0 24 22" width="25" height="23"><path d="M0 7l12-7 12 7v15H0z" fill="#1e78c8" /><path d="M0 7l12 8 12-8v15H0z" fill="#35a4ee" /><path d="M0 22l12-9 12 9z" fill="#7cc8f8" /></svg>
          </TaskIcon>
          <TaskIcon>
            <svg viewBox="0 0 24 24" width="25" height="25"><path d="M1 23l1.800-5.500A11 11 0 1 1 7 21.500z" fill="#fff" /><path d="M3.500 20.500l1-3.500A9 9 0 1 1 7.500 20z" fill="#29b048" /><path d="M8.500 6.500l2 .2 1 2.500-1.300 1.500c.7 1.500 2 2.800 3.500 3.500l1.500-1.300 2.500 1-.2 2c-.5 1-2 1.500-3 1.300C10 16.500 7 13 7 9.500c0-1 .7-2.500 1.500-3z" fill="#fff" /></svg>
          </TaskIcon>
          <TaskIcon>
            <svg viewBox="0 0 24 24" width="24" height="24"><circle cx="12" cy="12" r="11" fill="#fff" stroke="#c65bd1" strokeWidth="2" /><path d="M9.500 16V7l7-1.500v9" fill="none" stroke="#e0436b" strokeWidth="1.600" /><circle cx="8" cy="16.500" r="2" fill="#d84ba0" /><circle cx="15" cy="15" r="2" fill="#e0436b" /></svg>
          </TaskIcon>
          <TaskIcon $w={43}>
            <svg viewBox="0 0 24 24" width="25" height="25"><path d="M17 1l6 3v16l-6 3L7 14l-4 3-2-1V8l2-1 4 3zM17 7l-6 5 6 5z" fill="#1a8ad8" fillRule="evenodd" /></svg>
          </TaskIcon>
          <TaskIcon $w={44} $open>
            <svg viewBox="0 0 26 26" width="25" height="25"><path d="M1 3h24l-3 9-5 11h-6L5 12z" fill="#d92a1c" /><path d="M7 6l6 13 3-7 2-6-4 6-1 2-3-8z" fill="#fff" /><rect x="15" y="15" width="10" height="10" rx="1.500" fill="#3f82e0" /><path d="M17 18l1.500 5 1.500-3 1.500 3 1.500-5" fill="none" stroke="#fff" /></svg>
          </TaskIcon>
          <TaskIcon $active $open>
            <ChromeWrap><Chrome /><ChromeBadge><Avatar $size={16}>J</Avatar></ChromeBadge></ChromeWrap>
          </TaskIcon>
          <TaskIcon $open>
            <svg viewBox="0 0 22 22" width="22" height="22"><rect width="22" height="22" fill="#2aa7e8" /><path d="M0 22v-7l7-6 6 5 3-2 6 5v5z" fill="#1d5a9c" /><path d="M7 9l6 5-6 8H0v-7z" fill="#163d78" /><circle cx="15" cy="5" r="2" fill="#fff" /></svg>
          </TaskIcon>
          <TaskIcon $open>
            <ChromeWrap><Chrome /><ChromeBadge><Thumb /></ChromeBadge></ChromeWrap>
          </TaskIcon>
        </AppIcons>
        <Tray>
          <Weather>
            <svg viewBox="0 0 24 20" width="24" height="22"><path d="M3 12a9 9 0 0 1 18-3z" fill="#f8b91c" /><path d="M5 19a4 4 0 0 1 0-8 6 6 0 0 1 11-1 4.500 4.500 0 0 1 4 9z" fill="#d4e6f5" /></svg>
            31°C
          </Weather>
          <TrayIcon><svg viewBox="0 0 14 10" width="13" height="9"><path d="M1 8l6-6 6 6" fill="none" stroke="#eee" strokeWidth="1.200" /></svg></TrayIcon>
          <TrayIcon><svg viewBox="0 0 14 18" width="12" height="16" fill="none" stroke="#eee"><rect x="1.500" y="5" width="8" height="8" rx="1" /><path d="M9.500 8l3-1.500v5l-3-1.500M3 2h6M3 16h6" /></svg></TrayIcon>
          <TrayIcon><svg viewBox="0 0 18 11" width="17" height="11"><path d="M4 11a3.500 3.500 0 0 1 0-7 5 5 0 0 1 9-1 4 4 0 0 1 1 8z" fill="#e5e5e5" /></svg></TrayIcon>
          <TrayIcon><svg viewBox="0 0 18 14" width="17" height="13" fill="none" stroke="#eee" strokeWidth="1.200"><rect x="6" y="4" width="11" height="8" /><rect x="8" y="6" width="7" height="4" fill="#eee" /><path d="M1 2h4M3 1v4" /></svg></TrayIcon>
          <TrayIcon><svg viewBox="0 0 16 14" width="16" height="14" fill="none" stroke="#eee"><path d="M1 5h2.500L7 1.500v11L3.500 9H1zM10 5a3 3 0 0 1 0 4M12 3a6 6 0 0 1 0 8" /></svg></TrayIcon>
          <Clock>14:24<br />08/09/2022</Clock>
          <Notify>
            <svg viewBox="0 0 16 16" width="16" height="16"><rect width="16" height="13" fill="#fff" /><path d="M3 3.500h10M3 6.500h10M3 9.500h7" stroke="#38312b" /></svg>
            <NotifyBadge>23</NotifyBadge>
          </Notify>
        </Tray>
      </Taskbar>
    </Screen>
  )
}
